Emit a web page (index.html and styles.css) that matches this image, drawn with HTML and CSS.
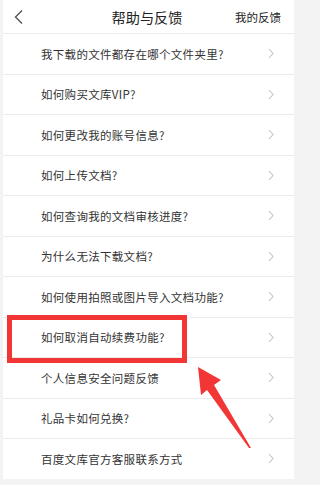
FILE: index.html
```html
<!DOCTYPE html>
<html lang="zh">
<head>
<meta charset="utf-8">
<link rel="stylesheet" href="styles.css">
</head>
<body>
<div class="page">
  <div class="header">
    <svg class="back" width="10" height="16" viewBox="0 0 10 16"><path d="M8 1.5 L1.5 8 L8 14.5" fill="none" stroke="#555" stroke-width="1.4"/></svg>
    <div class="title">帮助与反馈</div>
    <div class="mine">我的反馈</div>
  </div>
  <div class="list">
    <div class="row"><span class="txt">我下载的文件都存在哪个文件夹里?</span><svg class="chev" width="6" height="11" viewBox="0 0 6 11"><path d="M1 1 L5 5.5 L1 10" fill="none" stroke="#c4c4c4" stroke-width="1.1"/></svg></div>
    <div class="row"><span class="txt">如何购买文库VIP?</span><svg class="chev" width="6" height="11" viewBox="0 0 6 11"><path d="M1 1 L5 5.5 L1 10" fill="none" stroke="#c4c4c4" stroke-width="1.1"/></svg></div>
    <div class="row"><span class="txt">如何更改我的账号信息?</span><svg class="chev" width="6" height="11" viewBox="0 0 6 11"><path d="M1 1 L5 5.5 L1 10" fill="none" stroke="#c4c4c4" stroke-width="1.1"/></svg></div>
    <div class="row"><span class="txt">如何上传文档?</span><svg class="chev" width="6" height="11" viewBox="0 0 6 11"><path d="M1 1 L5 5.5 L1 10" fill="none" stroke="#c4c4c4" stroke-width="1.1"/></svg></div>
    <div class="row"><span class="txt">如何查询我的文档审核进度?</span><svg class="chev" width="6" height="11" viewBox="0 0 6 11"><path d="M1 1 L5 5.5 L1 10" fill="none" stroke="#c4c4c4" stroke-width="1.1"/></svg></div>
    <div class="row"><span class="txt">为什么无法下载文档?</span><svg class="chev" width="6" height="11" viewBox="0 0 6 11"><path d="M1 1 L5 5.5 L1 10" fill="none" stroke="#c4c4c4" stroke-width="1.1"/></svg></div>
    <div class="row"><span class="txt">如何使用拍照或图片导入文档功能?</span><svg class="chev" width="6" height="11" viewBox="0 0 6 11"><path d="M1 1 L5 5.5 L1 10" fill="none" stroke="#c4c4c4" stroke-width="1.1"/></svg></div>
    <div class="row"><span class="txt">如何取消自动续费功能?</span><svg class="chev" width="6" height="11" viewBox="0 0 6 11"><path d="M1 1 L5 5.5 L1 10" fill="none" stroke="#c4c4c4" stroke-width="1.1"/></svg></div>
    <div class="row"><span class="txt">个人信息安全问题反馈</span><svg class="chev" width="6" height="11" viewBox="0 0 6 11"><path d="M1 1 L5 5.5 L1 10" fill="none" stroke="#c4c4c4" stroke-width="1.1"/></svg></div>
    <div class="row"><span class="txt">礼品卡如何兑换?</span><svg class="chev" width="6" height="11" viewBox="0 0 6 11"><path d="M1 1 L5 5.5 L1 10" fill="none" stroke="#c4c4c4" stroke-width="1.1"/></svg></div>
    <div class="row"><span class="txt">百度文库官方客服联系方式</span><svg class="chev" width="6" height="11" viewBox="0 0 6 11"><path d="M1 1 L5 5.5 L1 10" fill="none" stroke="#c4c4c4" stroke-width="1.1"/></svg></div>
  </div>
  <svg class="overlay" width="294" height="485" viewBox="0 0 294 485">
    <rect x="9.5" y="317.5" width="175" height="43" fill="none" stroke="#f23535" stroke-width="5"/>
    <polygon points="198,367 221,380 214,385 251,448 249,448 207,390 201,395" fill="#f23535"/>
  </svg>
</div>
</body>
</html>
```

FILE: styles.css
```css
html, body {
  margin: 0;
  padding: 0;
}
body {
  background: #f3f3f3;
  font-family: "Noto Sans CJK SC", "Noto Sans", sans-serif;
}
.page {
  position: relative;
  width: 294px;
  height: 485px;
  overflow: hidden;
}
.header {
  margin-left: 3px;
  height: 33px;
  background: #fff;
  border-bottom: 1px solid #ececec;
  display: flex;
  align-items: center;
  position: relative;
}
.back {
  margin-left: 11px;
}
.title {
  position: absolute;
  left: 0;
  right: 0;
  text-align: center;
  font-size: 14.2px;
  color: #222;
  padding-left: 0;
  margin-left: -3px;
  pointer-events: none;
}
.mine {
  margin-left: auto;
  margin-right: 13px;
  font-size: 11.5px;
  color: #222;
}
.list {
  margin-left: 3px;
  display: flex;
  flex-direction: column;
  gap: 1px;
  background: #ebebeb;
}
.row {
  height: 39.5px;
  background: #fff;
  display: flex;
  align-items: center;
  padding-left: 38px;
  padding-right: 20px;
}
.txt {
  font-size: 11.5px;
  letter-spacing: 0.3px;
  color: #333;
}
.chev {
  margin-left: auto;
}
.overlay {
  position: absolute;
  left: 0;
  top: 0;
}
```
